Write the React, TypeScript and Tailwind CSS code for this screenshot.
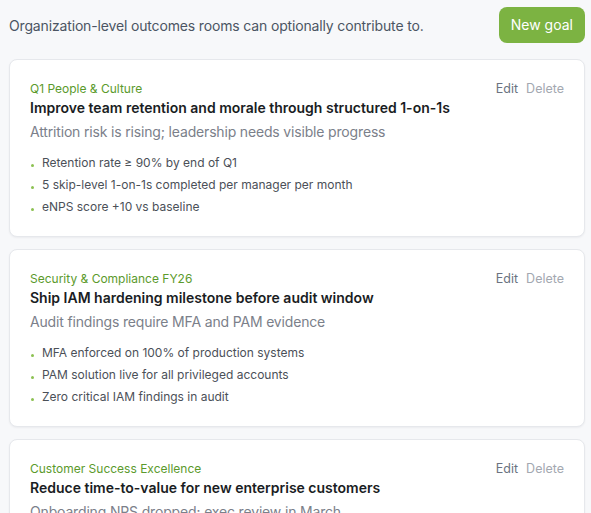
import React from "react";

type Goal = {
  category: string;
  title: string;
  description: string;
  metrics: string[];
};

const goals: Goal[] = [
  {
    category: "Q1 People & Culture",
    title: "Improve team retention and morale through structured 1-on-1s",
    description: "Attrition risk is rising; leadership needs visible progress",
    metrics: [
      "Retention rate ≥ 90% by end of Q1",
      "5 skip-level 1-on-1s completed per manager per month",
      "eNPS score +10 vs baseline",
    ],
  },
  {
    category: "Security & Compliance FY26",
    title: "Ship IAM hardening milestone before audit window",
    description: "Audit findings require MFA and PAM evidence",
    metrics: [
      "MFA enforced on 100% of production systems",
      "PAM solution live for all privileged accounts",
      "Zero critical IAM findings in audit",
    ],
  },
  {
    category: "Customer Success Excellence",
    title: "Reduce time-to-value for new enterprise customers",
    description: "Onboarding NPS dropped; exec review in March",
    metrics: [
      "Median time-to-first-value under 14 days",
      "Onboarding NPS back above 40",
      "Dedicated CSM for every new enterprise account",
    ],
  },
];

function GoalCard({ goal }: { goal: Goal }) {
  return (
    <div className="bg-white border border-[#e6e8ec] rounded-lg shadow-[0_1px_2px_rgba(16,24,40,0.05)] px-5 pt-5 pb-[18px]">
      <div className="flex items-start justify-between">
        <div className="min-w-0">
          <div className="text-[12px] leading-[18px] text-[#5b9a2c]">{goal.category}</div>
          <div className="text-[14px] leading-5 font-semibold text-[#1a1d23]">{goal.title}</div>
        </div>
        <div className="flex gap-2 text-[12.5px] leading-[18px] shrink-0">
          <button className="text-[#6b7280]">Edit</button>
          <button className="text-[#a3a8b1]">Delete</button>
        </div>
      </div>
      <div className="mt-[3px] text-[14px] tracking-[-0.012em] leading-[22px] text-[#7b808a]">
        {goal.description}
      </div>
      <ul className="mt-[9px]">
        {goal.metrics.map((m) => (
          <li key={m} className="flex items-center text-[12px] leading-[22px] text-[#4b5058]">
            <span className="w-[3px] h-[3px] rounded-full bg-[#8cc152] ml-[1px] mr-[8px] mt-[4px]" />
            {m}
          </li>
        ))}
      </ul>
    </div>
  );
}

export default function App() {
  return (
    <div
      className="min-h-screen bg-[#f7f8fa] pl-[9px] pr-[6px] pt-[7px]"
      style={{ fontFamily: "Inter, 'Noto Sans', sans-serif" }}
    >
      <div className="flex items-center justify-between">
        <p className="text-[14px] tracking-[-0.011em] text-[#4b5563]">
          Organization-level outcomes rooms can optionally contribute to.
        </p>
        <button className="bg-[#7cb342] text-white text-[14px] leading-5 px-3 py-2 rounded-lg">
          New goal
        </button>
      </div>
      <div className="mt-4 flex flex-col gap-3">
        {goals.map((g) => (
          <GoalCard key={g.title} goal={g} />
        ))}
      </div>
    </div>
  );
}
